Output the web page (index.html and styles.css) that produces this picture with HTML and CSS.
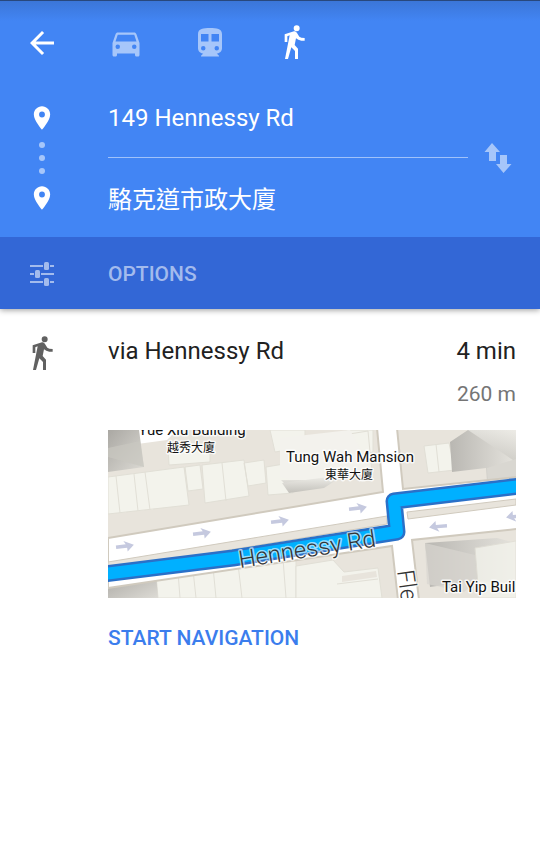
FILE: index.html
```html
<!DOCTYPE html>
<html lang="en">
<head>
<meta charset="utf-8">
<meta name="viewport" content="width=device-width, initial-scale=1">
<title>Directions</title>
<link rel="stylesheet" href="styles.css">
</head>
<body>
<header class="header">
  <nav class="modes" aria-label="Travel mode">
    <button class="icon-button" type="button" aria-label="Back">
      <svg class="icon" viewBox="0 0 24 24"><path d="M20 11H7.800l5.600-5.600L12 4l-8 8 8 8 1.400-1.400L7.800 13H20z"/></svg>
    </button>
    <button class="icon-button dim" type="button" aria-label="Driving">
      <svg class="icon" viewBox="0 0 24 24"><path d="M18.900 6c-.2-.6-.8-1-1.400-1h-11c-.7 0-1.200.4-1.400 1L3 12v8c0 .6.400 1 1 1h1c.6 0 1-.4 1-1v-1h12v1c0 .6.400 1 1 1h1c.6 0 1-.4 1-1v-8zM6.500 16a1.500 1.500 0 1 1 0-3 1.500 1.500 0 0 1 0 3zm11 0a1.500 1.500 0 1 1 0-3 1.500 1.500 0 0 1 0 3zM5 11l1.500-4.500h11L19 11z"/></svg>
    </button>
    <button class="icon-button dim" type="button" aria-label="Transit">
      <svg class="icon" viewBox="0 0 24 24"><path d="M12 2c-4.400 0-8 .5-8 4v9.500C4 17.400 5.600 19 7.500 19L6 20.500v.5h12v-.5L16.500 19c1.900 0 3.500-1.600 3.500-3.500V6c0-3.500-3.600-4-8-4zM7.500 17a1.500 1.500 0 1 1 0-3 1.500 1.500 0 0 1 0 3zm3.500-6H6V6h5zm2 0V6h5v5zm3.500 6a1.500 1.500 0 1 1 0-3 1.500 1.500 0 0 1 0 3z"/></svg>
    </button>
    <button class="icon-button" type="button" aria-label="Walking" aria-pressed="true">
      <svg class="icon" viewBox="0 0 108 108"><use href="#walker"/></svg>
    </button>
  </nav>

  <form class="route">
    <div class="stops">
      <svg class="pin" viewBox="0 0 24 24"><path id="pin" d="M12 2C8.100 2 5 5.100 5 9c0 5.200 7 13 7 13s7-7.800 7-13c0-3.900-3.100-7-7-7zm0 9.500a2.500 2.500 0 1 1 0-5 2.500 2.500 0 0 1 0 5z"/></svg>
      <svg class="dots" viewBox="0 0 6 32"><circle cx="3" cy="3" r="3"/><circle cx="3" cy="16" r="3"/><circle cx="3" cy="29" r="3"/></svg>
      <svg class="pin" viewBox="0 0 24 24"><use href="#pin"/></svg>
    </div>
    <div class="fields">
      <input class="field" type="text" aria-label="Starting point" value="149 Hennessy Rd">
      <input class="field" type="text" aria-label="Destination" value="駱克道市政大廈">
    </div>
    <button class="icon-button dim" type="button" aria-label="Swap start and destination">
      <svg class="icon" viewBox="0 0 36 36"><path d="M12 3L4.500 12H9v9h7v-9h4zM20 15h7v9h4.500L23.500 33 16 24h4z"/></svg>
    </button>
  </form>

  <button class="options" type="button">
    <svg class="icon" viewBox="0 0 36 36"><path d="M6 9h13v2H6zM26 9h4v2h-4zM6 17h4v2H6zM17 17h13v2H17zM6 25h13v2H6zM26 25h4v2h-4z"/><rect x="20" y="6" width="5" height="8" rx="1.500"/><rect x="11" y="14" width="5" height="8" rx="1.500"/><rect x="20" y="22" width="5" height="8" rx="1.500"/></svg>
    <span>OPTIONS</span>
  </button>
</header>

<main class="result">
  <svg class="icon result-icon" viewBox="0 0 108 108" aria-hidden="true">
    <path id="walker" d="M53 10a9 9 0 1 1 18 0 9 9 0 1 1-18 0zM26 28L54 19Q60 18 63 24L70 35Q74 39 86 39V47H76Q66 46 60 40L56 60L66 71V102H57V78L46 67L36 102H27L41 31L34 34V51H26z"/>
  </svg>
  <div class="details">
    <div class="summary">
      <h1 class="title">via Hennessy Rd</h1>
      <div class="totals"><span class="time">4 min</span><span class="distance">260 m</span></div>
    </div>
    <svg class="map" viewBox="0 0 408 168" role="img" aria-label="Route preview">
      <defs>
        <linearGradient id="shade-a" x2="1" y2="1"><stop stop-color="#aaa8a3"/><stop offset="1" stop-color="#dddbd5"/></linearGradient>
        <linearGradient id="shade-b" x2="1"><stop stop-color="#b9b7b2"/><stop offset="1" stop-color="#e5e3dd"/></linearGradient>
        <linearGradient id="shade-c" x2="0" y2="1"><stop stop-color="#f2f1ec"/><stop offset="1" stop-color="#c3c1bb"/></linearGradient>
        <path id="arrow" d="M0-1.500H10L8-5 18 0 11 6V2H0z"/>
      </defs>
      <rect class="land" width="408" height="168"/>
      <g class="building">
        <path d="M0 47L76 37 81 75 0 84zM8 46l4 37M26 44l4 37M37 42l5 38M77 37l15-2 3 24-15 2zM94 35l42-5 5 36-44 7zM114 33l4 38M136 33l20-3 2 23-18 3zM158 37l24-4 3 30-25 2zM60 18l42-6v20l-41 3zM162 0h35v17l-30 5zM238 0h27v22l-20 5z"/>
        <path d="M316 16l25-3 6 27-27 3zM328 14l3 28M48 144l140-18v42H50zM70 142l2 26M85 140l3 28M105 137l3 31M130 134l4 34M175 129l3 39"/>
        <path d="M188 136l37-6 11 12 34-4 4 30h-86zM229 154l41-5"/>
        <path d="M210 9l50-8 4 42-37 7z"/>
      </g>
      <path fill="#fff" d="M0 0h69l-10 10-59 8z"/>
      <path fill="url(#shade-a)" d="M0 0h31l5 37-36 5z"/><path fill="#c9c7c1" opacity=".7" d="M0 18l32-7 4 26L0 27z"/>
      <path fill="#f3f2ed" d="M172 8l70-8 22 40-66 14-26-7z"/>
      <path fill="url(#shade-c)" d="M173 50l8 8 36-4 22-8-36 4z"/>
      <path fill="url(#shade-c)" d="M181 63l35-5 20-13-62 8z"/>
      <path class="ground" d="M234 146l34-5 1 6-35 5z"/>
      <path fill="url(#shade-b)" d="M342 12l18-12h48v49l-29 3-1-14-34 4z"/>
      <path fill="url(#shade-c)" opacity=".6" d="M360 0l48 32V0z"/><path fill="#d9d7d1" d="M379 38l29-9v22l-28 2z"/>
      <path fill="url(#shade-a)" d="M0 151l48-7 2 24H0z"/><path fill="#eeede8" opacity=".45" d="M0 151l48-7v7L0 158z"/>
      <path fill="url(#shade-b)" d="M317 113l72-5 19 5v40l-43-2-43 6z"/>
      <path fill="#d8d6d0" d="M317 113l50 12 2 26-13 11-37-8z" opacity=".7"/>
      <path class="building" d="M367 118l41-7v57h-37z" opacity=".8"/>

      <path class="road" d="M0 108L275 62 269-2h20l6 61 114-12v52l-105 11 7 60h-21l-6-54L0 158z"/>
      <path class="median" d="M0 132L279 86v8L0 140zM299 82l109-13v6L300 89z"/>
      <g class="traffic">
        <use href="#arrow" transform="translate(8 117) rotate(-7)"/>
        <use href="#arrow" transform="translate(85 104) rotate(-7)"/>
        <use href="#arrow" transform="translate(163 92) rotate(-7)"/>
        <use href="#arrow" transform="translate(241 79) rotate(-7)"/>
        <use href="#arrow" transform="translate(339 96) rotate(175)"/>
        <use href="#arrow" transform="translate(416 86) rotate(175)"/>
      </g>
      <path class="line-edge" d="M-4 144L125 128 289 102 286 71 412 56"/>
      <path class="line-fill" d="M-4 144L125 128 289 102 286 71 412 56"/>
      <g class="label">
        <text x="84" y="5">Yue Xiu Building</text>
        <text class="small" x="83" y="22">越秀大廈</text>
        <text x="242" y="32">Tung Wah Mansion</text>
        <text class="small" x="241" y="49">東華大廈</text>
        <text class="from-start" x="334" y="162">Tai Yip Buil</text>
      </g>
      <g class="street">
        <text transform="translate(132 138) rotate(-9)">Hennessy Rd</text>
        <text transform="translate(289 141) rotate(82)">Fle</text>
      </g>
    </svg>
    <button class="start" type="button">START NAVIGATION</button>
  </div>
</main>
</body>
</html>
```
FILE: styles.css
```css
* { box-sizing: border-box; }

body {
  margin: 0;
  background: #fff;
  color: #212121;
  font-family: Roboto, "Noto Sans CJK TC", sans-serif;
  font-size: 24px;
}

button, input {
  margin: 0;
  padding: 0;
  border: 0;
  background: none;
  color: inherit;
  font: inherit;
}

svg { display: block; fill: currentColor; }

.header {
  border-top: 1px solid #28487d;
  background: linear-gradient(#3b76d8, #4285f4 20px);
  box-shadow: 0 1px 6px rgba(0, 0, 0, .4);
  color: #fff;
}

.modes {
  display: flex;
  gap: 48px;
  padding: 24px 24px 0;
}

.icon { width: 36px; height: 36px; flex: none; overflow: visible; }
.dim { color: #a6c6fa; }

.route {
  display: flex;
  align-items: center;
  padding: 18px 24px 0;
}

.stops {
  display: flex;
  flex-direction: column;
  align-items: center;
  gap: 10px;
  width: 36px;
  margin-right: 48px;
}

.pin { width: 28px; height: 28px; }
.dots { width: 6px; height: 32px; color: #a6c6fa; }

.fields {
  display: flex;
  flex: 1;
  flex-direction: column;
  min-width: 0;
  margin-right: 12px;
}

.field {
  width: 100%;
  height: 79px;
  border-radius: 0;
  outline: 0;
}

.field:first-child { border-bottom: 1px solid #a0c2fa; }

.options {
  display: flex;
  align-items: center;
  gap: 48px;
  width: 100%;
  height: 72px;
  padding: 2px 24px 0;
  background: #3367d6;
  color: #a3bbed;
  font-size: 21px;
  font-weight: 500;
}

.result {
  display: flex;
  gap: 48px;
  padding: 24px;
}

.result-icon { color: #616161; margin-top: 3px; }
.details { flex: 1; min-width: 0; }
.summary { display: flex; justify-content: space-between; }

.title {
  margin: 0;
  font-size: 24px;
  font-weight: 400;
  line-height: 36px;
}

.totals {
  display: flex;
  flex-direction: column;
  gap: 10px;
  text-align: right;
}

.time { line-height: 36px; }
.distance { color: #757575; font-size: 21px; line-height: 30px; }
.map { width: 100%; margin-top: 21px; overflow: hidden; }

.land { fill: #e8e4dc; }
.ground { fill: #e8e4dc; }
.building { fill: #f3f3ec; stroke: #e1dfd6; }
.road { fill: #fff; stroke: #d0cabe; stroke-width: 2; }
.median { fill: #e8e4dc; stroke: #d0cabe; }
.traffic { fill: #c5c9df; }
.line-edge, .line-fill { fill: none; stroke-linejoin: round; }
.line-edge { stroke: #2a70c8; stroke-width: 17; }
.line-fill { stroke: #00b0ff; stroke-width: 12; }

.label, .street {
  paint-order: stroke;
  stroke: rgba(255, 255, 255, .8);
  stroke-linejoin: round;
  stroke-width: 3;
}

.label { fill: #111; font-size: 15px; text-anchor: middle; }
.label .small { font-size: 12px; }
.label .from-start { text-anchor: start; }
.street { fill: #333; font-size: 24px; stroke: rgba(255, 255, 255, .6); font-weight: 300; }

.start {
  height: 32px;
  margin-top: 24px;
  color: #3b7ded;
  font-size: 21px;
  font-weight: 500;
}
```
